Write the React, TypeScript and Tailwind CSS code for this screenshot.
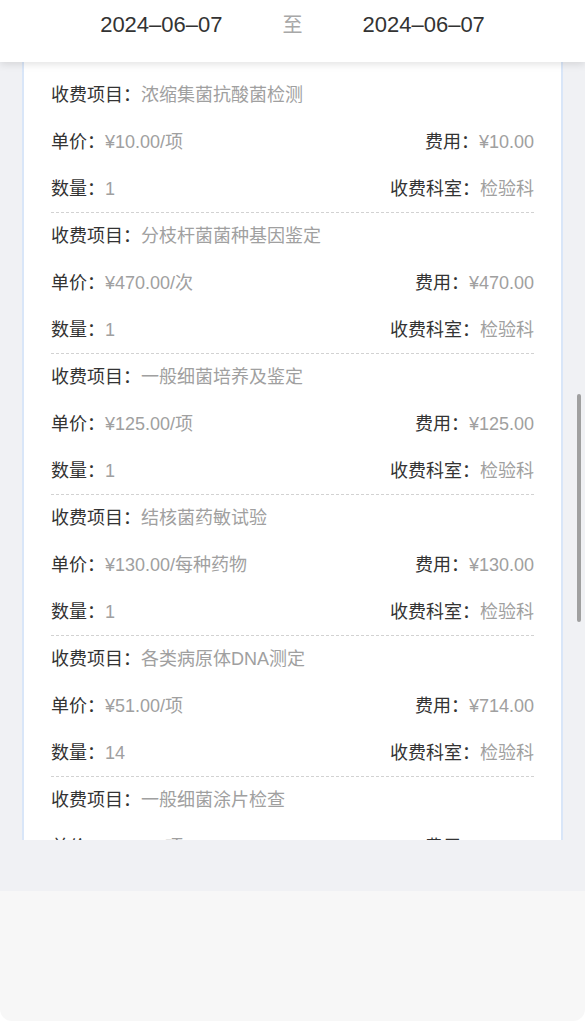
import React from "react";

type Item = { name: string; unit: string; fee: string; qty: string };

const items: Item[] = [
  { name: "浓缩集菌抗酸菌检测", unit: "¥10.00/项", fee: "¥10.00", qty: "1" },
  { name: "分枝杆菌菌种基因鉴定", unit: "¥470.00/次", fee: "¥470.00", qty: "1" },
  { name: "一般细菌培养及鉴定", unit: "¥125.00/项", fee: "¥125.00", qty: "1" },
  { name: "结核菌药敏试验", unit: "¥130.00/每种药物", fee: "¥130.00", qty: "1" },
  { name: "各类病原体DNA测定", unit: "¥51.00/项", fee: "¥714.00", qty: "14" },
  { name: "一般细菌涂片检查", unit: "¥15.00/项", fee: "¥15.00", qty: "1" },
];

const font = { fontFamily: '"Liberation Sans", "Noto Sans CJK SC", sans-serif' };

function Field({ label, value }: { label: string; value: string }) {
  return (
    <div className="flex items-center whitespace-nowrap">
      <span className="text-[#333333]">{label}：</span>
      <span className="text-[#a0a0a0]">{value}</span>
    </div>
  );
}

export default function App() {
  return (
    <div className="relative w-[585px] h-[1021px] overflow-hidden bg-[#f7f7f7] rounded-b-[12px]" style={font}>
      <div className="relative z-10 h-[62px] bg-white shadow-[0_2px_8px_rgba(0,0,0,0.12)] flex justify-center gap-[60px] pt-[10px] text-[22px] leading-[30px]">
        <span className="text-[#333333]">2024–06–07</span>
        <span className="text-[#a8a8a8] text-[20px]">至</span>
        <span className="text-[#333333]">2024–06–07</span>
      </div>
      <div className="h-[829px] bg-[#f0f1f4] px-[22px]">
        <div className="h-[778px] overflow-hidden">
          <div className="bg-white border-x-2 border-[#d9e6f8] px-[27px] pt-[10px] text-[18px]">
            {items.map((it, i) => (
              <div key={i}>
                <div className="h-[47px] flex items-center">
                  <Field label="收费项目" value={it.name} />
                </div>
                <div className="h-[47px] flex items-center justify-between">
                  <Field label="单价" value={it.unit} />
                  <Field label="费用" value={it.fee} />
                </div>
                <div className="h-[47px] flex items-center justify-between border-b border-dashed border-[#d2d2d2]">
                  <Field label="数量" value={it.qty} />
                  <Field label="收费科室" value="检验科" />
                </div>
              </div>
            ))}
          </div>
        </div>
      </div>
      <div className="absolute left-[577px] top-[394px] w-[4px] h-[228px] rounded-full bg-[#a0a0a0]" />
    </div>
  );
}
